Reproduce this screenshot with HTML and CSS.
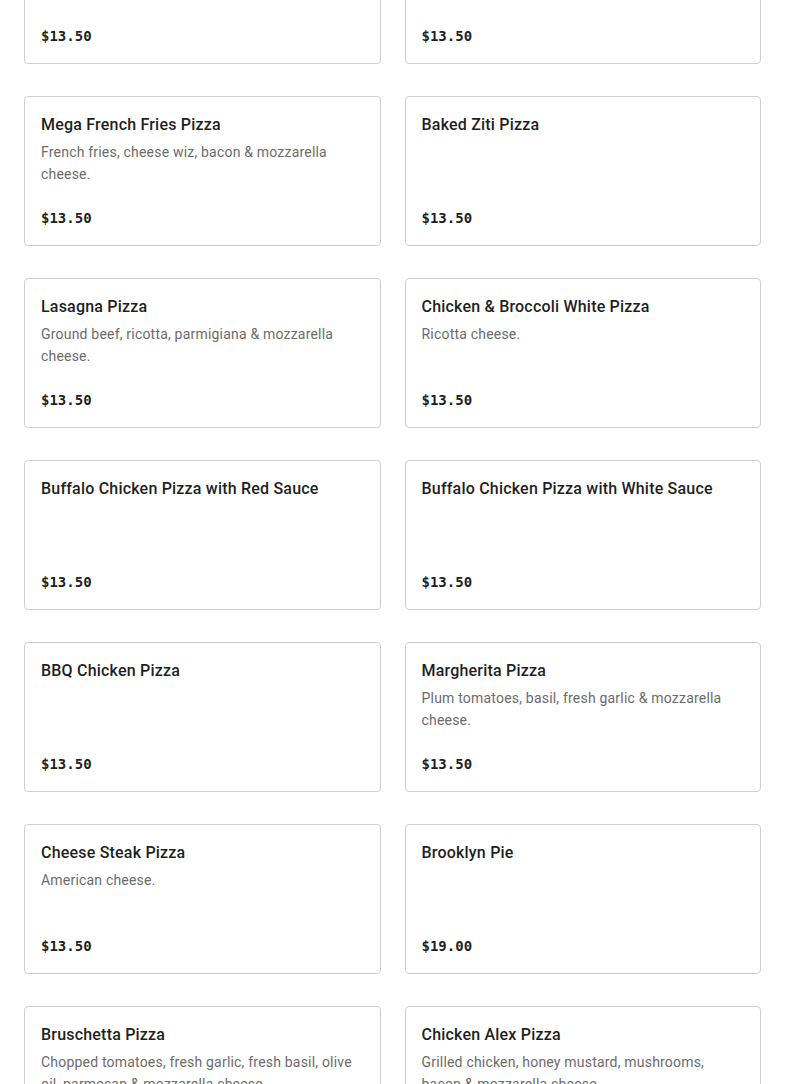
FILE: index.html
```html
<!DOCTYPE html>
<html lang="en">
<head>
<meta charset="utf-8">
<title>Pizza Menu</title>
<link rel="stylesheet" href="styles.css">
</head>
<body>
<main class="menu">
  <div class="grid">
    <article class="card">
      <h3 class="name">Hawaiian Pizza</h3>
      <div class="price">$13.50</div>
    </article>
    <article class="card">
      <h3 class="name">Chicken Bacon Ranch Pizza</h3>
      <p class="desc">Grilled chicken, bacon, ranch dressing &amp; mozzarella cheese.</p>
      <div class="price">$13.50</div>
    </article>

    <article class="card">
      <h3 class="name">Mega French Fries Pizza</h3>
      <p class="desc">French fries, cheese wiz, bacon &amp; mozzarella cheese.</p>
      <div class="price">$13.50</div>
    </article>
    <article class="card">
      <h3 class="name">Baked Ziti Pizza</h3>
      <div class="price">$13.50</div>
    </article>

    <article class="card">
      <h3 class="name">Lasagna Pizza</h3>
      <p class="desc">Ground beef, ricotta, parmigiana &amp; mozzarella cheese.</p>
      <div class="price">$13.50</div>
    </article>
    <article class="card">
      <h3 class="name">Chicken &amp; Broccoli White Pizza</h3>
      <p class="desc">Ricotta cheese.</p>
      <div class="price">$13.50</div>
    </article>

    <article class="card">
      <h3 class="name">Buffalo Chicken Pizza with Red Sauce</h3>
      <div class="price">$13.50</div>
    </article>
    <article class="card">
      <h3 class="name">Buffalo Chicken Pizza with White Sauce</h3>
      <div class="price">$13.50</div>
    </article>

    <article class="card">
      <h3 class="name">BBQ Chicken Pizza</h3>
      <div class="price">$13.50</div>
    </article>
    <article class="card">
      <h3 class="name">Margherita Pizza</h3>
      <p class="desc">Plum tomatoes, basil, fresh garlic &amp; mozzarella cheese.</p>
      <div class="price">$13.50</div>
    </article>

    <article class="card">
      <h3 class="name">Cheese Steak Pizza</h3>
      <p class="desc">American cheese.</p>
      <div class="price">$13.50</div>
    </article>
    <article class="card">
      <h3 class="name">Brooklyn Pie</h3>
      <div class="price">$19.00</div>
    </article>

    <article class="card">
      <h3 class="name">Bruschetta Pizza</h3>
      <p class="desc">Chopped tomatoes, fresh garlic, fresh basil, olive oil, parmesan &amp; mozzarella cheese.</p>
      <div class="price">$13.50</div>
    </article>
    <article class="card">
      <h3 class="name">Chicken Alex Pizza</h3>
      <p class="desc">Grilled chicken, honey mustard, mushrooms, bacon &amp; mozzarella cheese.</p>
      <div class="price">$13.50</div>
    </article>
  </div>
</main>
</body>
</html>
```
FILE: styles.css
```css
html, body {
  margin: 0;
  padding: 0;
  background: #ffffff;
}

body {
  font-family: "Roboto", "Liberation Sans", sans-serif;
  color: #1f1f1f;
  overflow: hidden;
}

.menu {
  padding: 0 24px;
}

.grid {
  display: grid;
  grid-template-columns: 1fr 1fr;
  column-gap: 24px;
  row-gap: 32px;
  margin-top: -86px;
}

.card {
  box-sizing: border-box;
  height: 150px;
  border: 1px solid #cfcfcf;
  border-radius: 4px;
  padding: 16px;
  display: flex;
  flex-direction: column;
  background: #fff;
}

.name {
  margin: 0;
  font-size: 16px;
  line-height: 24px;
  font-weight: 500;
  letter-spacing: 0.2px;
  color: #1f1f1f;
}

.desc {
  margin: 4px 0 0;
  font-size: 14px;
  line-height: 22px;
  letter-spacing: 0.2px;
  color: #6b6b6b;
}

.price {
  margin-top: auto;
  font-family: "DejaVu Sans Mono", "Liberation Mono", monospace;
  font-size: 14px;
  line-height: 21px;
  font-weight: 700;
  color: #1f1f1f;
}
```
